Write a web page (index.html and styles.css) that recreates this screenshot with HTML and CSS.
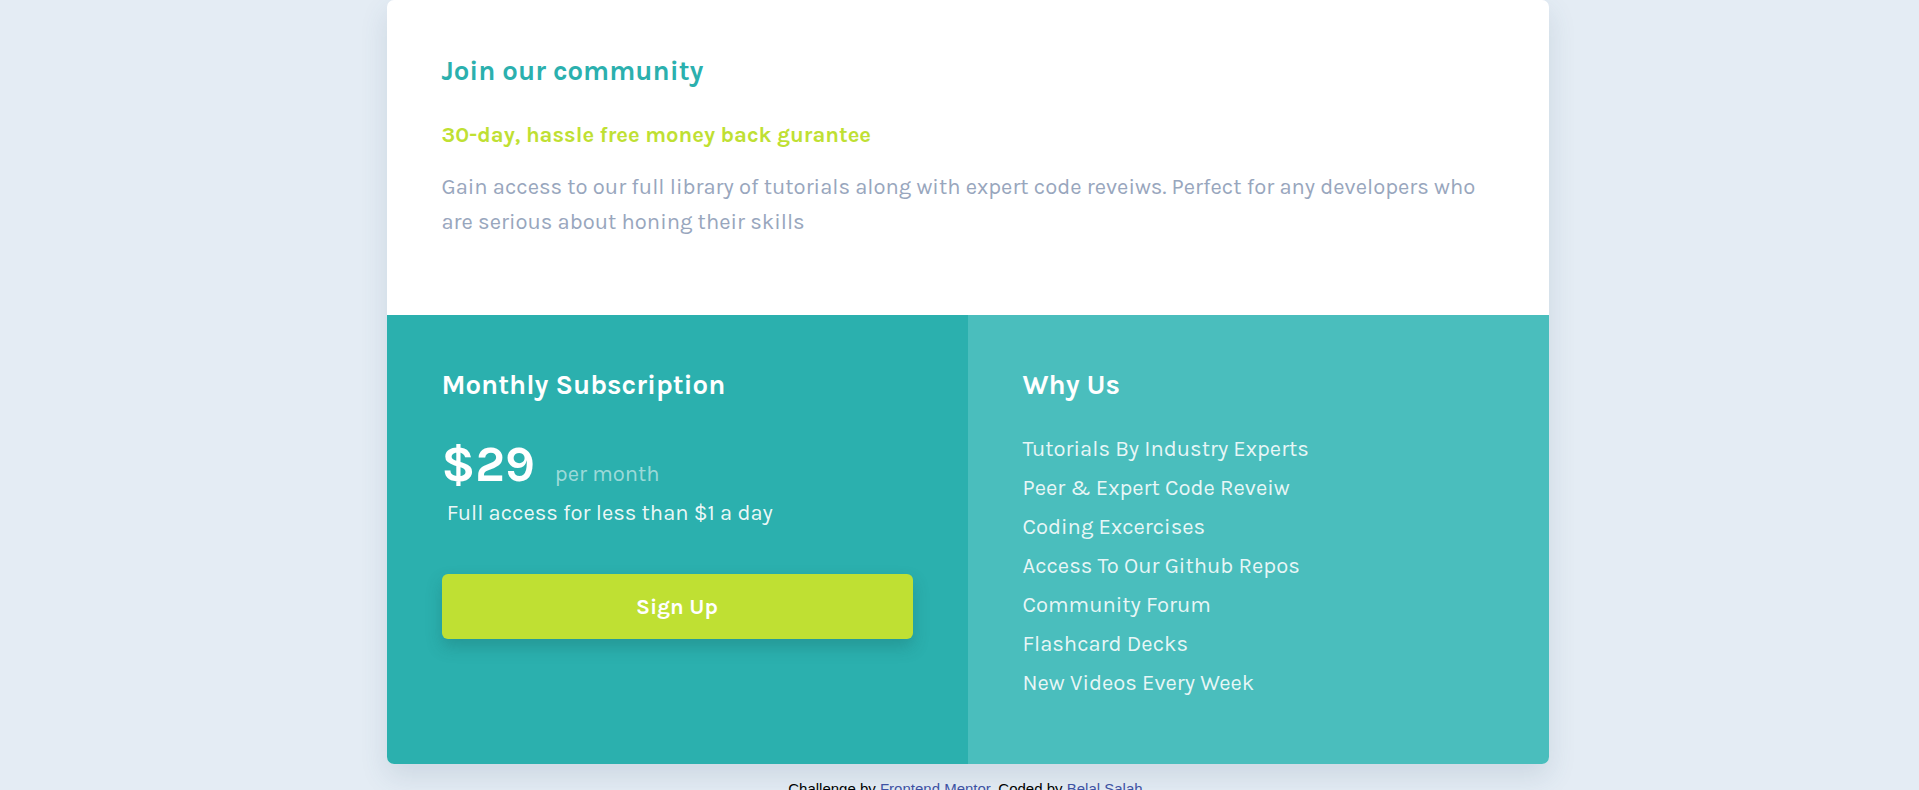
FILE: index.html
```html
<!DOCTYPE html>
<html lang="en">
<head>
<meta charset="utf-8">
<title>Single Price Grid</title>
<link rel="stylesheet" href="styles.css">
</head>
<body>
<main class="card">
  <section class="intro">
    <h1 class="intro-title">Join our community</h1>
    <h2 class="intro-sub">30-day, hassle free money back gurantee</h2>
    <p class="intro-text">Gain access to our full library of tutorials along with expert code reveiws. Perfect for any developers who are serious about honing their skills</p>
  </section>
  <div class="bottom">
    <section class="sub">
      <h2 class="col-title">Monthly Subscription</h2>
      <div class="price-row">
        <span class="price">$29</span>
        <span class="per">per month</span>
      </div>
      <p class="access">&nbsp;Full access for less than $1 a day</p>
      <button class="signup">Sign Up</button>
    </section>
    <section class="why">
      <h2 class="col-title">Why Us</h2>
      <ul class="why-list">
        <li>Tutorials By Industry Experts</li>
        <li>Peer &amp; Expert Code Reveiw</li>
        <li>Coding Excercises</li>
        <li>Access To Our Github Repos</li>
        <li>Community Forum</li>
        <li>Flashcard Decks</li>
        <li>New Videos Every Week</li>
      </ul>
    </section>
  </div>
</main>
<footer class="attribution">
  Challenge by <a href="#">Frontend Mentor</a>. Coded by <a href="#">Belal Salah</a>.
</footer>
</body>
</html>
```

FILE: styles.css
```css
* { box-sizing: border-box; }

body {
  margin: 0;
  padding: 0 0 0 16px;
  background: #e4ecf4;
  font-family: "Karla", "Inter", "Open Sans", sans-serif;
  display: flex;
  flex-direction: column;
  align-items: center;
}

.card {
  width: 1162px;
  background: #fff;
  border-radius: 7px;
  overflow: hidden;
  box-shadow: 0 12px 28px rgba(60, 90, 120, 0.14);
}

.intro {
  padding: 55px 55px 76px;
}

.intro-title {
  margin: 0;
  font-size: 27.5px;
  line-height: 32px;
  font-weight: 700;
  color: #2bb0ae;
}

.intro-sub {
  margin: 34px 0 0;
  font-size: 22px;
  line-height: 28px;
  font-weight: 700;
  color: #bfe033;
}

.intro-text {
  margin: 21px 0 0;
  font-size: 22px;
  line-height: 34.5px;
  color: #98a6bd;
}

.bottom {
  display: grid;
  grid-template-columns: 1fr 1fr;
  height: 449px;
}

.sub {
  background: #2bb0ae;
  padding: 55px 55px;
  color: #fff;
}

.why {
  background: #4abebd;
  padding: 55px 55px;
  color: #fff;
}

.col-title {
  margin: 0;
  font-size: 27.5px;
  line-height: 31px;
  font-weight: 700;
}

.price-row {
  display: flex;
  align-items: baseline;
  gap: 20px;
  height: 56px;
  margin-top: 36px;
}

.price {
  font-size: 49px;
  line-height: 56px;
  font-weight: 700;
}

.per {
  font-size: 22px;
  line-height: 28px;
  color: rgba(255, 255, 255, 0.55);
}

.access {
  margin: 6px 0 0;
  font-size: 22px;
  line-height: 28px;
  color: rgba(255, 255, 255, 0.92);
}

.signup {
  display: block;
  width: 100%;
  height: 65px;
  margin-top: 47px;
  border: none;
  border-radius: 6px;
  background: #bfe033;
  color: #fff;
  font-family: inherit;
  font-size: 22px;
  font-weight: 700;
  box-shadow: 0 8px 16px rgba(20, 80, 80, 0.25);
}

.why-list {
  list-style: none;
  margin: 28.5px 0 0;
  padding: 0;
}

.why-list li {
  font-size: 22px;
  line-height: 39px;
  color: rgba(255, 255, 255, 0.88);
}

.attribution {
  margin-top: 16px;
  font-family: "Liberation Sans", Arial, sans-serif;
  font-size: 15px;
  line-height: 17px;
  color: #000;
}

.attribution a {
  color: #3e52a3;
  text-decoration: none;
}
```
